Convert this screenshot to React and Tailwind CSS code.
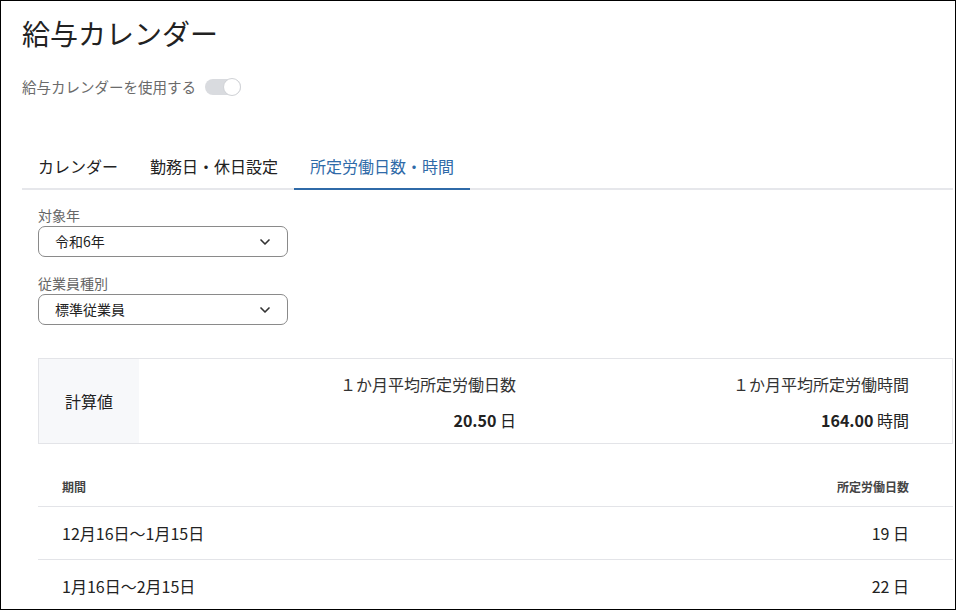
import { ChevronDown } from 'lucide-react'

const font = { fontFamily: '"Noto Sans CJK JP", "Noto Sans", sans-serif' }

function Select({ label, value }) {
  return (
    <div className="flex flex-col">
      <span className="text-[14px] leading-[20px] text-[#666]">{label}</span>
      <div className="mt-[1px] flex h-[31px] w-[250px] items-center justify-between rounded-[7px] border border-[#8a8a8a] pl-[16px] pr-[14px]">
        <span className="text-[14px] text-[#222]">{value}</span>
        <ChevronDown size={16} strokeWidth={2.5} className="text-[#333]" />
      </div>
    </div>
  )
}

const tabs = ['カレンダー', '勤務日・休日設定', '所定労働日数・時間']

const rows = [
  { period: '12月16日〜1月15日', days: '19' },
  { period: '1月16日〜2月15日', days: '22' },
]

export default function App() {
  return (
    <div style={font} className="h-[610px] w-[956px] overflow-hidden border border-black bg-white text-[#222]">
      <div className="pl-[21px] pr-[2px]">
        <h1 className="pt-[14px] text-[28px] leading-[36px] font-normal text-[#222]">給与カレンダー</h1>

        <div className="mt-[26px] flex items-center gap-[9px]">
          <span className="text-[14.5px] leading-[20px] text-[#6b6b6b]">給与カレンダーを使用する</span>
          <div className="relative h-[16px] w-[36px] rounded-full bg-[#d9dbdf]">
            <div className="absolute right-0 top-[-1px] h-[18px] w-[18px] rounded-full border border-[#d0d2d6] bg-white" />
          </div>
        </div>

        <div className="mt-[57px] flex border-b-2 border-[#e6e7eb]">
          {tabs.map((t, i) => (
            <div
              key={t}
              className={
                i === 2
                  ? '-mb-[2px] border-b-2 border-[#2f6aa8] px-[16px] pb-[10px] text-[16px] leading-[24px] text-[#2f6aa8]'
                  : 'px-[16px] pb-[10px] text-[16px] leading-[24px] text-[#222]'
              }
            >
              {t}
            </div>
          ))}
        </div>

        <div className="pl-[16px]">
          <div className="mt-[15px] flex flex-col gap-[16px]">
            <Select label="対象年" value="令和6年" />
            <Select label="従業員種別" value="標準従業員" />
          </div>

          <div className="mt-[33px] flex h-[86px] border border-[#e3e4e8]">
            <div className="flex w-[100px] items-center justify-center bg-[#f7f8fa] text-[16px]">計算値</div>
            <div className="flex w-[393px] flex-col items-end justify-center gap-[13px] pr-[16px]">
              <span className="text-[16px] leading-[24px] text-[#333]">１か月平均所定労働日数</span>
              <span className="text-[16px] leading-[22px]"><b className="font-bold">20.50</b> 日</span>
            </div>
            <div className="flex w-[393px] flex-col items-end justify-center gap-[13px] pr-[16px]">
              <span className="text-[16px] leading-[24px] text-[#333]">１か月平均所定労働時間</span>
              <span className="text-[16px] leading-[22px]"><b className="font-bold">164.00</b> 時間</span>
            </div>
            <div className="flex-1" />
          </div>

          <div className="mt-[34px]">
            <div className="flex h-[29px] items-start justify-between border-b border-[#e3e4e8] pl-[24px] pr-[44px] text-[12px] leading-[18px] font-bold text-[#444]">
              <span>期間</span>
              <span>所定労働日数</span>
            </div>
            {rows.map((r) => (
              <div key={r.period} className="flex h-[53px] items-center justify-between border-b border-[#e3e4e8] pl-[24px] pr-[44px] text-[16px] text-[#222]">
                <span>{r.period}</span>
                <span>{r.days} 日</span>
              </div>
            ))}
          </div>
        </div>
      </div>
    </div>
  )
}
